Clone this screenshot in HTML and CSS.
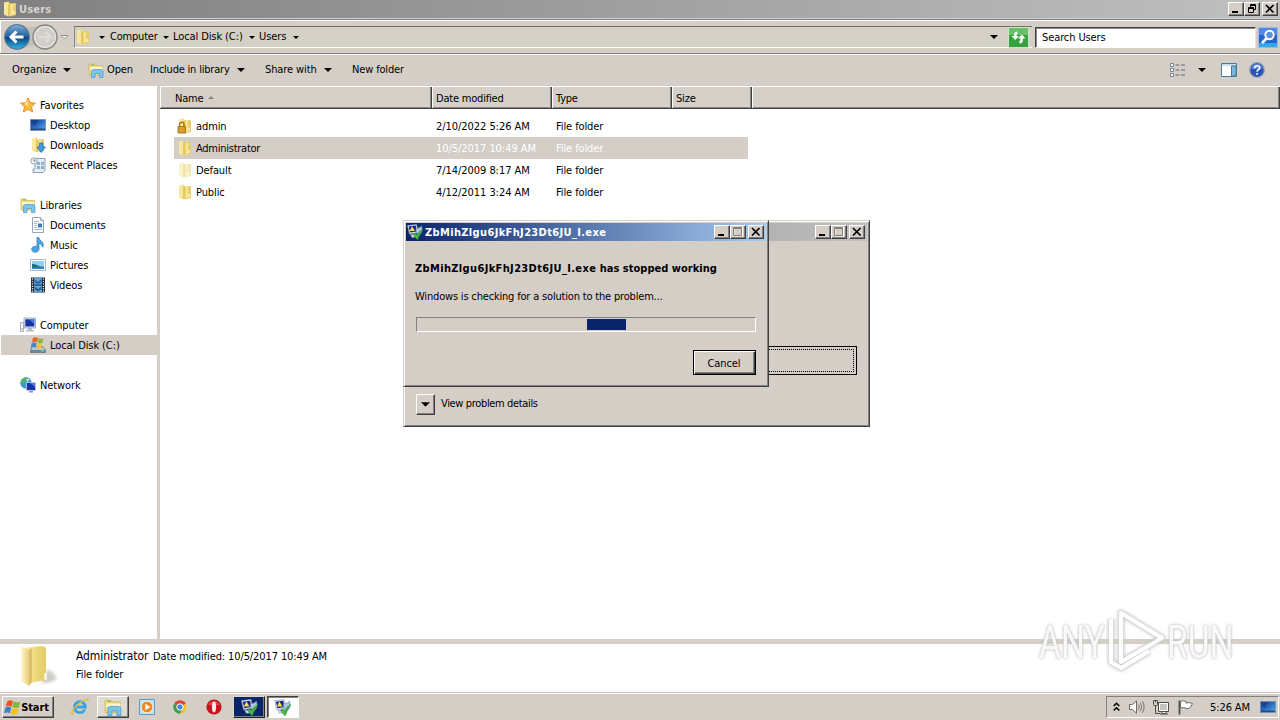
FILE: index.html
```html
<!DOCTYPE html>
<html lang="en">
<head>
<meta charset="utf-8">
<title>Users</title>
<link rel="stylesheet" href="styles.css">
</head>
<body>
<svg class="defs" width="0" height="0">
<defs>
<linearGradient id="gFold" x1="0" x2="1"><stop offset="0" stop-color="#fbeeb0"/><stop offset=".5" stop-color="#efd878"/><stop offset="1" stop-color="#e4cc6a"/></linearGradient>
<linearGradient id="gFold2" x1="0" x2="1"><stop offset="0" stop-color="#fff6cc"/><stop offset="1" stop-color="#e8cf7c"/></linearGradient>
<linearGradient id="gBlue" x1="0" y1="0" x2="0" y2="1"><stop offset="0" stop-color="#7fb0d8"/><stop offset=".48" stop-color="#1c5f9c"/><stop offset=".5" stop-color="#0b3f78"/><stop offset="1" stop-color="#2fb4e8"/></linearGradient>
<linearGradient id="gScr" x1="0" y1="0" x2="1" y2="1"><stop offset="0" stop-color="#123a8c"/><stop offset=".5" stop-color="#2a6cc4"/><stop offset="1" stop-color="#5fb0ec"/></linearGradient>
<symbol id="folder" viewBox="0 0 16 16"><path d="M2 1.500 7 .5v2L13 2q1 0 1 1v11l-6 1.500L2 13z" fill="url(#gFold)"/><path d="M2 1.500 6 3v12.500L2 13.500z" fill="#f7e79c"/><path d="M6 3l2-1v12l-2 1.500z" fill="#e2c860"/><path d="M10 3v11" stroke="#fff3b8"/><path d="M12 10v3" stroke="#fff" /></symbol>
<symbol id="lib" viewBox="0 0 16 16"><path d="M1 2h5l1 1.500h7.500V13H1z" fill="#f0da80" stroke="#d4b650" stroke-width=".7"/><path d="M2 5h12.500v3H2z" fill="#fdf6cf"/><path d="M3 3h3" stroke="#6db36b"/><path d="M3.500 15.500V9.500Q3.500 7.500 5.500 7.500h7.500q2 0 2 2v6h-3.500v-4h-4.500v4z" fill="#7cc6ea" stroke="#4a98c8" stroke-width=".7"/></symbol>
<symbol id="star" viewBox="0 0 16 16"><path d="M8 .8 10.200 5.600l5.200.6-3.900 3.500 1.100 5.300L8 12.300 3.400 15l1.100-5.300L.6 6.200l5.200-.6z" fill="#fdb83e" stroke="#e08a1e" stroke-width=".9"/><path d="M8 3v6L4 7z" fill="#ffe08c"/></symbol>
<symbol id="screen" viewBox="0 0 16 16"><path d="M.5 2.500h15v11H.5z" fill="url(#gScr)" stroke="#6e8cae" stroke-width=".8"/><path d="M1 11.500h14v1.500H1z" fill="#264d80"/><path d="M1 3h8L4 9z" fill="#1b418f"/></symbol>
<symbol id="down" viewBox="0 0 16 16"><use href="#folder"/><path d="M9.500 6h3.500v4h2.500L11.200 15.500 7 10h2.500z" fill="#3f9be0" stroke="#1b66ac" stroke-width=".7"/></symbol>
<symbol id="recent" viewBox="0 0 16 16"><path d="M5 1.500h10v12l-2 2H3V12h2z" fill="#e4edf3" stroke="#8297a8" stroke-width=".9"/><path d="M7 5h3v3H7zM11 5h3v3h-3zM7 9h3v3H7zM11 9h3v3h-3z" fill="#8fb2c8"/><circle cx="4" cy="4" r="3.200" fill="#f4f7f9" stroke="#8b9aa6" stroke-width=".9"/><path d="M4 2v2h1.500" stroke="#556" stroke-width=".8" fill="none"/></symbol>
<symbol id="doc" viewBox="0 0 16 16"><path d="M2.500.5h8l3 3v12h-11z" fill="#fff" stroke="#8a9bb0" stroke-width=".9"/><path d="M10.500.5v3h3" fill="#dde6ef" stroke="#8a9bb0" stroke-width=".8"/><path d="M4 4.500h5M4 6.500h3M4 8.500h3M4 10.500h3M4 12.500h8" stroke="#9cb3cc" stroke-width=".9"/><path d="M8 6.500h4v4H8z" fill="#3f7fc0"/></symbol>
<symbol id="music" viewBox="0 0 16 16"><path d="M7 .5h1.800q.4 2.500 3.200 4.200 2.200 2 .8 5.600-.5-3-3.800-4.300v6.200a3.700 3 0 1 1-2-2.600z" fill="#49a7e6" stroke="#2a78bd" stroke-width=".7"/></symbol>
<symbol id="pic" viewBox="0 0 16 16"><path d="M.5 2.500h15v11H.5z" fill="#fff" stroke="#8ea4b8" stroke-width=".8"/><path d="M2 4h12v8H2z" fill="#8fd0f2"/><path d="M2 7q3-.5 6 1.500t6 1V12H2z" fill="#1f6a86"/><path d="M2 10.300h12V12H2z" fill="#2f86c8"/></symbol>
<symbol id="video" viewBox="0 0 16 16"><path d="M1 .5h14v15H1z" fill="#222a36"/><path d="M4 1h8v6.500H4zM4 8.500h8V15H4z" fill="#5fa4dc"/><path d="M2.500 1.500v14M13.500 1.500v14" stroke="#e6ebf0" stroke-width="1.200" stroke-dasharray="1.200 1.200"/><path d="M4.500 2 8 5l3.500-3v3L8 7 4.500 5zM4.500 9.500 8 12l3.500-2.500v3L8 14.500l-3.500-2z" fill="#2a6196"/></symbol>
<symbol id="comp" viewBox="0 0 16 16"><path d="M4 1h11.500v10H4z" fill="#dde3ea" stroke="#8694a4" stroke-width=".7"/><path d="M5.300 2.300h9v7.200h-9z" fill="#1633a8"/><path d="M9 2.300h5.300V7z" fill="#5676dc"/><path d="M8 11h4v2h2v1.500H6V13h2z" fill="#b4bcc6"/><path d="M.5 5.500h3v9h-3z" fill="#f0f2f4" stroke="#8c949c" stroke-width=".7"/><path d="M1.500 12h1" stroke="#3aa03a"/></symbol>
<symbol id="disk" viewBox="0 0 16 16"><path d="M2.500 9.500h10l3 3.500v2.500H.5V13z" fill="#b9c4cc" stroke="#5e707c" stroke-width=".8"/><path d="M1 13h14v2H1z" fill="#5a8ea8"/><path d="M11.500 14h2.500" stroke="#7df06a"/><path d="M3 .8q2.500-1.200 5 .2L7 5.300q-2.500-1.200-5 0z" fill="#e8602c"/><path d="M8.500 1.300q2.500 1.400 5 .2l-1.200 4.300q-2.400 1.200-4.800 0z" fill="#83bd3c"/><path d="M1.700 6.100q2.500-1.200 5 .2l-1.200 4.300q-2.400-1.200-4.800 0z" fill="#3f86d8"/><path d="M7.200 6.600q2.500 1.400 5 .2L11 11.100q-2.400 1.200-4.800 0z" fill="#f6c32e"/></symbol>
<symbol id="net" viewBox="0 0 16 16"><circle cx="6" cy="6" r="5.400" fill="#3a9ed4" stroke="#24709e" stroke-width=".5"/><path d="M2 3q3-3 6-2Q7 4 4 5T2 9Q0 6 2 3z" fill="#58b84a"/><path d="M6 2.500q2-1.500 3.500 0L7.500 5z" fill="#bfe6f4"/><path d="M6.500 5.500h9v8h-9z" fill="#1633a8" stroke="#c8d2e0" stroke-width=".8"/><path d="M10 6h5v4z" fill="#5676dc"/><path d="M9 14h4v1.500H9z" fill="#8a97a8"/></symbol>
<symbol id="wer" viewBox="0 0 16 16"><path d="M.5 1.500 9.500.5l1.500 8-8.500 1.500z" fill="#e4e8ee" stroke="#8fa0b4" stroke-width=".6"/><path d="M1.700 2.500 8.700 1.600l1.100 6-6.600 1z" fill="#10248c"/><path d="m5 2.200 3 4.800H2.800z" fill="#ffe04a"/><path d="M3.500 10.500h5l1 2.500-4.500.5z" fill="#d4dae0" stroke="#8c98a4" stroke-width=".5"/><path d="M9 4.500q3.500 0 5.500-2.500 2 6-2.500 9.500Q8.500 9.500 9 4.500z" fill="#a9c6da" stroke="#6f93aa" stroke-width=".6"/><path d="m6 10.500 2.300-1.300L10 11q2-4 6-6-3.500 5-5.500 11z" fill="#46b649" stroke="#2c8a36" stroke-width=".5"/></symbol>
<symbol id="flagwin" viewBox="0 0 18 18"><path d="M3.500 2.500q3-2.200 6-.4L8 8.200Q5 6.700 1.700 8z" fill="#ea5423"/><path d="M10.200 2.600q3.300 1.600 7 .2L15.700 8.800q-3.600 1.400-7-.2z" fill="#7db93a"/><path d="M1.500 9q3.300-1.500 6.200.1L6.200 15q-2.800-1.500-6.200-.2z" fill="#3b7fd4"/><path d="M8.500 9.600q3.300 1.500 7 .1L14 15.700q-3.500 1.400-6.900-.2z" fill="#f8c21c"/></symbol>
<symbol id="min" viewBox="0 0 12 10"><path d="M2 7h6v2H2z" fill="#000"/></symbol>
<symbol id="max" viewBox="0 0 12 10"><path d="M2 .5h8.500v8.500H2z" fill="none" stroke="#fff"/><path d="M1.500.5h8v8h-8zM1.500 1.500h8" fill="none" stroke="#858078"/></symbol>
<symbol id="rest" viewBox="0 0 12 10"><path d="M4.500 3V.5h5v5H7.500M4 1.500h6M2.500 3.500h5v5h-5zM2 4.500h6" fill="none" stroke="#000"/></symbol>
<symbol id="cls" viewBox="0 0 12 10"><path d="m2 1 7.500 7.500M9.500 1 2 8.500" stroke="#000" stroke-width="1.700"/></symbol>
<symbol id="tri" viewBox="0 0 8 4"><path d="M0 0h8L4 4z"/></symbol>
</defs>
</svg>

<main class="explorer">
<header class="titlebar main-title">
<svg class="i16"><use href="#folder"/></svg><span class="grow">Users</span>
<span class="caps"><b class="cap"><svg><use href="#min"/></svg></b><b class="cap"><svg><use href="#rest"/></svg></b><b class="cap last"><svg><use href="#cls"/></svg></b></span>
</header>
<nav class="address">
<svg class="backfwd" width="72" height="32" viewBox="0 0 72 32">
<path d="M16 3.500q14 5 29 0l12 8v8l-12 8q-15-5-29 0z" fill="#c2beb8"/>
<circle cx="17" cy="16" r="12.300" fill="url(#gBlue)" stroke="#5b7690" stroke-width="1.200"/>
<path d="M23.500 16H11.500M16.500 10.500 11 16l5.500 5.500" fill="none" stroke="#fff" stroke-width="3"/>
<circle cx="45" cy="16" r="12" fill="#d0cec9" stroke="#86847f" stroke-width="1.300"/><circle cx="45" cy="16" r="10.400" fill="none" stroke="#eeece8"/>
<path d="M38.500 16h12M46 11l5 5-5 5" fill="none" stroke="#dedbd6" stroke-width="2.600"/>
<path d="M61 14.500h7L64.500 18z" fill="#fff" stroke="#8c8984" stroke-width=".9"/></svg>
<div class="path">
<svg class="i16"><use href="#folder"/></svg>
<svg class="tri t0"><use href="#tri"/></svg><span class="w-comp">Computer</span>
<svg class="tri"><use href="#tri"/></svg><span class="w-disk">Local Disk (C:)</span>
<svg class="tri"><use href="#tri"/></svg><span class="w-users">Users</span>
<svg class="tri"><use href="#tri"/></svg>
<svg class="tri pathdrop"><use href="#tri"/></svg>
</div>
<svg class="refresh" width="21" height="21" viewBox="0 0 21 21"><path d="M.5.500h20v20H.5z" fill="#35a33d" stroke="#cfe4cc"/><path d="M1 1h19v7H1z" fill="#67bf66"/><path d="M9.500 4.500Q6 4.500 6 8v1H3.500l3.700 4L11 9H8.500q0-2 1-2.500zM11.500 16.500q3.500 0 3.500-4v-1h2.500l-3.700-4-3.800 4h2.500q0 2-1 2.500z" fill="#fff"/></svg>
<div class="search">Search Users</div>
<svg class="go" width="20" height="21" viewBox="0 0 20 21"><path d="M.5.500h19v20H.5z" fill="#2763cf" stroke="#9dbbea"/><path d="M1 1h18v7H1z" fill="#5588e2"/><path d="M1 16h18v4H1z" fill="#35a8ea"/><circle cx="11.500" cy="8" r="4.200" fill="#5c8fe6" stroke="#fff" stroke-width="1.900"/><path d="m8.500 11.500-4.500 4.500" stroke="#fff" stroke-width="2.600"/></svg>
</nav>
<div class="toolbar">
<span class="t-org">Organize</span><svg class="tri big"><use href="#tri"/></svg>
<svg class="i16 t-openi"><use href="#lib"/></svg><span class="t-open">Open</span>
<span class="t-inc">Include in library</span><svg class="tri big"><use href="#tri"/></svg>
<span class="t-share">Share with</span><svg class="tri big"><use href="#tri"/></svg>
<span class="t-new">New folder</span>
<svg class="views" width="16" height="14" viewBox="0 0 16 14"><path d="M.5.500h3v3h-3zM.5 5.500h3v3h-3zM.5 10.500h3v3h-3z" fill="#fff" stroke="#77838c"/><path d="M5.500 2h4M11 2h4M5.500 7h4M11 7h4M5.500 12h4M11 12h4" stroke="#5e6a76"/></svg>
<svg class="tri big"><use href="#tri"/></svg>
<svg class="pane" width="16" height="14" viewBox="0 0 16 14"><path d="M.5.500h15v13H.5z" fill="#fff" stroke="#47799c"/><path d="M1 1h14v2H1z" fill="#c9dcea"/><path d="M10.500 3h4.500v10h-4.500z" fill="#7ab9dc" stroke="#47799c"/></svg>
<svg class="help" width="16" height="16" viewBox="0 0 16 16"><circle cx="8" cy="8" r="7.300" fill="#2a51b4" stroke="#8d9db8" stroke-width="1.300"/><path d="M2.500 7a5.500 5 0 0 1 11 0z" fill="#5d86da"/><path d="M5.600 6.200q0-2.500 2.500-2.500t2.500 2.200q0 1.200-1.300 1.900T8.100 9.700" stroke="#fff" stroke-width="1.600" fill="none"/><path d="M7.300 11h1.600v1.700H7.300z" fill="#fff"/></svg>
</div>
<div class="middle">
<aside class="side">
<div class="n"><svg class="i16"><use href="#star"/></svg><span>Favorites</span></div>
<div class="n c"><svg class="i16"><use href="#screen"/></svg><span>Desktop</span></div>
<div class="n c"><svg class="i16"><use href="#down"/></svg><span>Downloads</span></div>
<div class="n c"><svg class="i16"><use href="#recent"/></svg><span>Recent Places</span></div>
<div class="n gap"><svg class="i16"><use href="#lib"/></svg><span>Libraries</span></div>
<div class="n c"><svg class="i16"><use href="#doc"/></svg><span>Documents</span></div>
<div class="n c"><svg class="i16"><use href="#music"/></svg><span>Music</span></div>
<div class="n c"><svg class="i16"><use href="#pic"/></svg><span>Pictures</span></div>
<div class="n c"><svg class="i16"><use href="#video"/></svg><span>Videos</span></div>
<div class="n gap"><svg class="i16"><use href="#comp"/></svg><span>Computer</span></div>
<div class="n c sel"><svg class="i16"><use href="#disk"/></svg><span>Local Disk (C:)</span></div>
<div class="n gap"><svg class="i16"><use href="#net"/></svg><span>Network</span></div>
</aside>
<section class="files">
<div class="head"><div class="h name"><span>Name</span><svg width="6" height="3" viewBox="0 0 6 3"><path d="M0 3h6L3 0z" fill="#8a867e"/></svg></div><div class="h">Date modified</div><div class="h">Type</div><div class="h size">Size</div><div class="h rest"></div></div>
<div class="rows">
<div class="r"><svg class="i16" viewBox="0 0 16 16"><use href="#folder"/><path d="M2.500 9V6.500a2 2 0 0 1 4.500 0V9" fill="none" stroke="#a8781c" stroke-width="1.400"/><path d="M1 8.500h7.500V15H1z" fill="#dd9f2a" stroke="#96651a" stroke-width=".8"/></svg><span class="fn">admin</span><span class="fd">2/10/2022 5:26 AM</span><span class="ft">File folder</span></div>
<div class="r on"><svg class="i16"><use href="#folder"/></svg><span class="fn tight">Administrator</span><span class="fd">10/5/2017 10:49 AM</span><span class="ft">File folder</span></div>
<div class="r"><svg class="i16 dim"><use href="#folder"/></svg><span class="fn">Default</span><span class="fd">7/14/2009 8:17 AM</span><span class="ft">File folder</span></div>
<div class="r"><svg class="i16"><use href="#folder"/></svg><span class="fn">Public</span><span class="fd">4/12/2011 3:24 AM</span><span class="ft">File folder</span></div>
</div>
</section>
</div>
<footer class="details">
<svg width="42" height="42" viewBox="0 0 42 42"><defs><filter id="sh"><feGaussianBlur stdDeviation="1.500"/></filter></defs><path d="M22 38 29 24l8 7q2 4-8 7z" fill="#bbb9b4" filter="url(#sh)" opacity=".7"/><path d="M6 3 22 1q5 0 5 3v31l-16 3z" fill="url(#gFold)"/><path d="M2 1 10 5v36L2 36z" fill="url(#gFold2)"/><path d="m10 5 3-2v34l-3 4z" fill="#dcbf6c"/><path d="M26.500 28v7" stroke="#fff" stroke-width="2"/></svg>
<div class="dt"><div><span class="big">Administrator</span><span class="dm">Date modified:</span><span class="dv">10/5/2017 10:49 AM</span></div><div>File folder</div></div>
</footer>
</main>

<section class="dlg back">
<header class="titlebar gray"><span class="grow"></span><span class="caps"><b class="cap"><svg><use href="#min"/></svg></b><b class="cap"><svg><use href="#max"/></svg></b><b class="cap last"><svg><use href="#cls"/></svg></b></span></header>
<div class="cmdlink"><i></i></div>
<div class="more"><b class="btn drop"><svg class="tri"><use href="#tri"/></svg></b><span>View problem details</span></div>
</section>
<section class="dlg front">
<header class="titlebar blue"><svg class="i16"><use href="#wer"/></svg><span class="grow">ZbMihZlgu6JkFhJ23Dt6JU_I.exe</span><span class="caps"><b class="cap"><svg><use href="#min"/></svg></b><b class="cap"><svg><use href="#max"/></svg></b><b class="cap last"><svg><use href="#cls"/></svg></b></span></header>
<h1><span class="exe">ZbMihZlgu6JkFhJ23Dt6JU_I.exe</span> has stopped working</h1>
<p>Windows is checking for a solution to the problem...</p>
<div class="bar"><i></i></div>
<div class="act"><b class="btn cancel">Cancel</b></div>
</section>

<div class="mark">
<span>ANY</span>
<svg width="62" height="66" viewBox="0 0 62 66" fill="none" stroke-linejoin="round"><g class="soft" stroke="#c8c8c8" stroke-width="7"><path d="M15 6 56 31 15 55zM5 12v43l10 6 28-17"/></g><g stroke="#fff" stroke-width="4"><path d="M15 6 56 31 15 55zM5 12v43l10 6 28-17"/></g></svg>
<span class="run">RUN</span>
</div>

<footer class="taskbar">
<b class="btn start"><svg width="17" height="17"><use href="#flagwin"/></svg><span>Start</span></b>
<svg class="ie" width="20" height="18" viewBox="0 0 20 18"><path d="M14.800 11.500A5.500 5.500 0 1 1 15.300 9H5" fill="none" stroke="#36a4e0" stroke-width="2.800"/><path d="M3 16.500Q-1 14 8 6.500T18.500 3" fill="none" stroke="#e9b93c" stroke-width="1.500"/></svg>
<b class="btn ex"><svg width="18" height="18"><use href="#lib"/></svg></b>
<svg class="wmp" width="16" height="16" viewBox="0 0 16 16"><path d="M.5.500h15v15H.5z" fill="#bfe2f4" stroke="#5a9cc4"/><circle cx="8" cy="8" r="5.800" fill="#f08a1c" stroke="#fff" stroke-width=".7"/><path d="m6.300 4.700 5 3.300-5 3.300z" fill="#fff"/></svg>
<svg class="chr" width="14" height="14" viewBox="0 0 14 14"><circle cx="7" cy="7" r="6.700" fill="#f4c62c"/><path d="M7 7 1.200 3.600A6.700 6.700 0 0 1 12.800 3.600z" fill="#dc4438"/><path d="M7 7 1.200 3.600A6.700 6.700 0 0 0 7 13.700l2.500-5z" fill="#36a156"/><circle cx="7" cy="7" r="3.200" fill="#4a86e4" stroke="#fff"/></svg>
<svg class="opera" width="16" height="16" viewBox="0 0 16 16"><circle cx="8" cy="8" r="7.600" fill="#c8141e"/><path d="M2 6a6.500 6 0 0 1 12 0z" fill="#dc4442"/><ellipse cx="8" cy="8" rx="2.100" ry="5.400" fill="#f4eaea"/></svg>
<b class="btn w1"><svg width="17" height="17"><use href="#wer"/></svg></b>
<b class="btn w2"><svg width="17" height="17"><use href="#wer"/></svg></b>
<div class="tray">
<svg width="7" height="10" viewBox="0 0 7 10"><path d="M.7 4 3.500 1.200 6.300 4M.7 8.500l2.800-2.800 2.800 2.800" fill="none" stroke="#000" stroke-width="1.500"/></svg>
<svg class="spk" width="16" height="14" viewBox="0 0 16 14"><path d="M.5 4.500h3L7.500.8v12.400L3.500 9.500h-3z" fill="#fff" stroke="#6d6a66"/><path d="M9.500 4.500q1.500 2.500 0 5M11.500 2.800q2.500 4.200 0 8.400M13.500 1.300q3.200 5.700 0 11.400" fill="none" stroke="#77736e"/></svg>
<svg class="nt" width="16" height="15" viewBox="0 0 16 15"><path d="M5.500 2.500h10v9h-10z" fill="#c7c4bf" stroke="#4f4d4a"/><path d="M6.500 3.500h8v7h-8z" fill="none" stroke="#fff"/><path d="M7 14h8M9 12v1.500h4V12" stroke="#4f4d4a" fill="#fff"/><path d="M.5.500h4v4q0 1-1 1h-2q-1 0-1-1zM2.500 5.500v8H7M2.500.5v2" stroke="#4f4d4a" fill="none"/></svg>
<svg class="fl" width="16" height="15" viewBox="0 0 16 15"><path d="M1.500.500v14" stroke="#5c5955" stroke-width="2"/><path d="M2.500 1.500q3-1.500 5.500 0v1.500q3.500-1 6.500.500-1 3-3.500 5-2 .5-3.500-.5-2-1-5 .2z" fill="#fff" stroke="#6c6965"/></svg>
<span class="clock">5:26 AM</span>
<svg class="i16"><use href="#screen"/></svg>
</div>
</footer>
</body>
</html>
```
FILE: styles.css
```css
* { box-sizing: border-box; }
body { margin: 0; width: 1280px; height: 720px; overflow: hidden; background: #d4cec7; color: #000; font: 11px/14px "DejaVu Sans Condensed", "DejaVu Sans", sans-serif; font-stretch: condensed; letter-spacing: -0.1px; display: flex; flex-direction: column; white-space: nowrap; }
svg { display: block; flex: none; }
.defs { position: absolute; }
.i16 { width: 16px; height: 16px; }
.grow { flex: 1; }
.tri { width: 6px; height: 3px; }
.tri.big { width: 8px; height: 4px; }

.explorer { height: 692px; flex: none; display: flex; flex-direction: column; }
.explorer > * { flex: none; }
.titlebar { display: flex; align-items: center; height: 18px; font-weight: bold; }
.main-title { padding: 0 2px; color: #d8d4cc; background: linear-gradient(90deg, #808080, #c0c0c0); }
.main-title .grow { padding: 1px 0 0 1px; letter-spacing: 0.2px; }
.caps { display: flex; }
.cap { width: 16px; height: 14px; background: #d4cec7; border: 1px solid; border-color: #fff #404040 #404040 #fff; box-shadow: inset -1px -1px #808080; display: block; padding: 1px 1px; }
.cap svg { width: 12px; height: 10px; }
.cap.last { margin-left: 2px; }

.address { height: 36px; border-top: 1px solid #808080; box-shadow: inset 0 1px #fff, inset 0 -1px #fff, inset 0 -2px #808080, inset 1px 0 #fff; display: flex; align-items: center; padding: 0 2px 1px 0; margin-top: 1px; }
.backfwd { margin-right: 2px; }
.path { width: 958px; height: 22px; border-top: 1px solid #75716a; border-left: 1px solid #8a867e; border-bottom: 1px solid #fff; background: #d4d0c5; display: flex; align-items: center; }
.path .t0 { margin: 0 5px 0 8px; }
.path span { flex: none; margin-right: 7px; }
.path .tri { margin-right: 4px; }
.path .t0 + .w-comp { margin-left: 1px; margin-right: 6px; }
.path .pathdrop { width: 8px; height: 4px; margin-left: auto; margin-right: 34px; }
.w-comp { width: 47px; letter-spacing: -0.2px; } .w-disk { width: 69px; letter-spacing: -0.1px; } .w-users { width: 27px; }
.refresh { margin-left: -24px; }
.search { margin-left: 6px; width: 221px; height: 21px; border: 1px solid; border-color: #404040 #e6e2dc #fff #404040; box-shadow: inset 1px 1px #8c8880; background: #fff; padding: 3px 6px; }
.go { margin-left: 2px; }

.toolbar { height: 31px; display: flex; align-items: center; padding: 0 0 1px 12px; }
.toolbar .tri.big { margin-right: 1px; margin-left: -1px; }
.t-org { width: 52px; letter-spacing: 0; }
.t-openi { margin-left: 16px; } .t-open { width: 43px; margin-left: 3px; }
.t-inc { width: 88px; letter-spacing: -0.2px; }
.t-share { width: 60px; margin-left: 19px; }
.t-new { margin-left: 19px; width: 818px; letter-spacing: -0.15px; }
.views { margin-right: 13px; }
.pane { margin-left: 14px; }
.help { margin-left: 12px; }

.middle { height: 553px; display: flex; background: #fff; }
.side { width: 160px; padding: 9px 0 0 1px; border-right: 3px solid #d4cec7; }
.n { height: 20px; padding-left: 19px; display: flex; align-items: center; gap: 4px; }
.n span, .r span { padding-top: 1px; }
.n.c { padding-left: 29px; }
.n.gap { margin-top: 20px; }
.n.sel { background: #d4cec7; }
.files { flex: 1; }
.head { height: 23px; display: flex; background: #d4cfc7; border-top: 1px solid #fff; border-bottom: 1px solid #404040; box-shadow: inset 0 -1px #8a867e; }
.h { width: 120px; padding: 5px 0 0 4px; border-right: 1px solid #404040; box-shadow: inset 1px 0 #fff, inset -1px 0 #8a867e; letter-spacing: -0.2px; }
.h.name { width: 272px; padding-left: 15px; display: flex; gap: 5px; }
.h.name svg { margin-top: 4px; }
.h.size { width: 80px; } .h.rest { flex: 1; }
.rows { padding: 6px 0 0 14px; }
.r { width: 574px; height: 22px; padding-left: 3px; display: flex; align-items: center; }
.fn { width: 240px; margin-left: 3px; } .fd { width: 120px; letter-spacing: -0.05px; }
.tight { letter-spacing: -0.25px; }
.on { background: #d4cec7; } .on .fd, .on .ft { color: #fff; }
.dim { opacity: .5; }
.details { height: 53px; border-top: 5px solid #d4d0c8; background: #fff; display: flex; padding-left: 19px; }
.details > svg { margin-top: 1px; }
.dt { margin: 3px 0 0 15px; line-height: 18px; }
.dt .big { display: inline-block; width: 77px; font-size: 12px; }
.dm { display: inline-block; width: 75px; }

.dlg { position: absolute; left: 403px; top: 220px; background: #d4cec7; border: 1px solid; border-color: #d4d0c8 #404040 #404040 #d4d0c8; box-shadow: inset 1px 1px #fff, inset -1px -1px #808080; padding: 2px; }
.dlg .titlebar { padding: 0 2px; }
.back { width: 467px; height: 207px; }
.front { width: 366px; height: 167px; }
.gray { background: linear-gradient(90deg, #808080, #c0c0c0); }
.blue { background: linear-gradient(90deg, #0a246a, #a6caf0); color: #fff; }
.blue .i16 { margin-left: -1px; }
.blue .grow { padding: 1px 0 0 2px; letter-spacing: 0.35px; }
.cmdlink { margin: 105px 10px 0 10px; height: 29px; border: 1px solid #000; padding: 2px; }
.cmdlink i { display: block; height: 23px; border: 1px dotted #000; }
.more { display: flex; gap: 6px; margin: 19px 0 0 10px; letter-spacing: -0.35px; }
.more span { padding-top: 3px; }
.btn { display: flex; align-items: center; justify-content: center; background: #d4cec7; border: 1px solid; border-color: #fff #404040 #404040 #fff; box-shadow: inset -1px -1px #808080; }
.drop { width: 19px; height: 21px; } .drop .tri { width: 9px; height: 5px; }
h1, p { margin: 0 0 0 9px; font-size: 11px; line-height: 14px; }
h1 { margin-top: 21px; letter-spacing: 0.02px; }
.exe { letter-spacing: 0.35px; }
p { margin-top: 14px; letter-spacing: -0.18px; }
.bar { margin: 13px 10px 0 10px; height: 15px; border: 1px solid; border-color: #808080 #fff #fff #808080; padding: 1px 0 0 170px; }
.bar i { display: block; width: 39px; height: 11px; background: #0a246a; }
.act { display: flex; justify-content: flex-end; padding: 18px 10px 0; }
.cancel { width: 63px; height: 25px; padding: 2px 1px 0 0; font-weight: normal; border-color: #000; box-shadow: inset 1px 1px #fff, inset -1px -1px #404040, inset -2px -2px #808080; }

.mark { position: absolute; left: 1039px; top: 607px; width: 200px; height: 66px; font: 46px/66px "Liberation Sans Narrow", "Roboto", sans-serif; color: rgba(255,255,255,.9); text-shadow: 0 0 4px #bbb, 0 0 2px #ccc; letter-spacing: 0; }
.mark span { position: absolute; left: 0; top: 2px; transform-origin: 0 50%; transform: scaleX(.73); }
.mark .run { left: 128px; }
.mark svg { position: absolute; left: 67px; top: 0; opacity: .9; }
.soft { filter: blur(1.500px); }

.taskbar { height: 28px; flex: none; border-top: 1px solid #c8c4bc; box-shadow: inset 0 1px #fff; display: flex; align-items: center; padding: 1px 1px 0 2px; }
.start { width: 52px; height: 22px; gap: 0; font-size: 11px; }
.start svg { margin-left: -3px; }
.start span, .clock { padding-top: 1px; }
.ie { margin-left: 16px; }
.ex { width: 32px; height: 22px; margin-left: 7px; background: #dedad4; }
.wmp { margin-left: 10px; } .chr { margin-left: 18px; } .opera { margin-left: 19px; }
.w1 { width: 32px; height: 22px; margin-left: 11px; background: #0a246a; border-color: #dcd8d2 #222 #222 #dcd8d2; }
.w2 { width: 32px; height: 22px; margin-left: 2px; background: #fff; border-color: #404040 #fff #fff #404040; box-shadow: inset 1px 1px #808080; }
.w2 svg { margin-left: -2px; }
.tray { margin-left: auto; width: 173px; height: 22px; border: 1px solid; border-color: #808080 #fff #fff #808080; display: flex; align-items: center; padding-left: 6px; }
.spk { margin-left: 9px; } .nt { margin-left: 8px; } .fl { margin-left: 9px; }
.clock { width: 41px; margin: 0 9px 0 16px; }
```
